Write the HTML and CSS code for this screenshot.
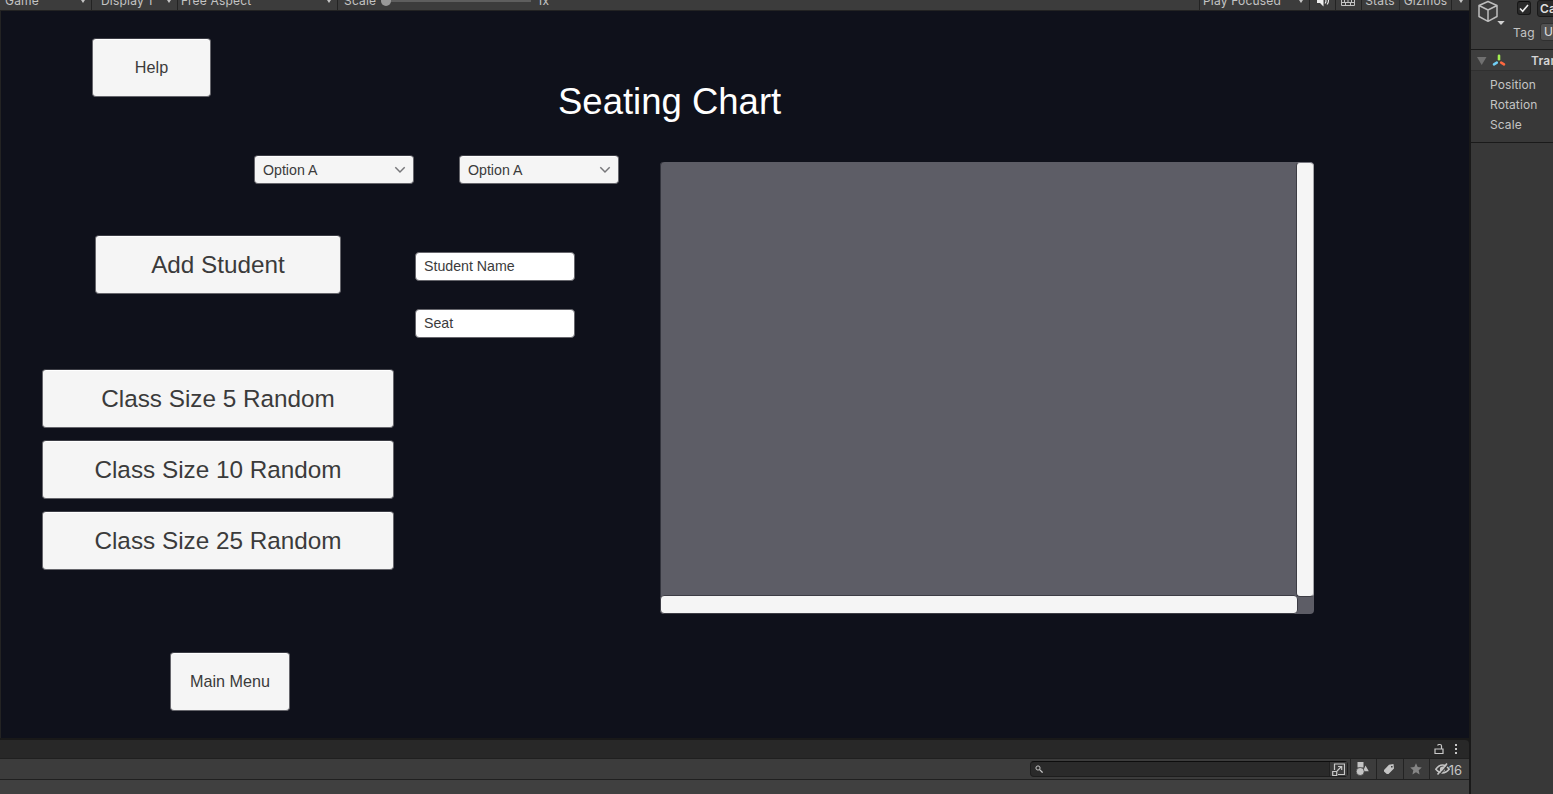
FILE: index.html
```html
<!DOCTYPE html>
<html lang="en">
<head>
<meta charset="utf-8">
<title>Seating Chart</title>
<link rel="stylesheet" href="styles.css">
</head>
<body>
<div class="editor">
  <main class="workspace">
    <header class="game-toolbar">
      <div class="tool tool-game"><span>Game</span><i class="caret"></i></div>
      <div class="tool tool-display"><span>Display 1</span><i class="caret"></i></div>
      <div class="tool tool-aspect"><span>Free Aspect</span><i class="caret"></i></div>
      <div class="tool tool-scale"><span>Scale</span><div class="slider"><b></b></div><span>1x</span></div>
      <div class="tool tool-play"><span>Play Focused</span><i class="caret"></i></div>
      <div class="tool tool-icon tool-sound"><svg width="14" height="14" viewBox="0 0 14 14"><path d="M1 5h3l3.500-3.500v11L4 9H1z" fill="#eee"/><path d="M9 4.500q2 2.500 0 5M11 2.500q3 4.500 0 8" fill="none" stroke="#eee" stroke-width="1.1"/></svg></div>
      <div class="tool tool-icon tool-grid"><svg width="14" height="12" viewBox="0 0 14 12"><path d="M.5 1.500h13v9H.5zM0 4.500h14M0 7.500h14M3.500 1v6.500M7 1v6.500M10.500 1v6.500M4.500 7.500v3M9.500 7.500v3" fill="none" stroke="#c4c4c4"/></svg></div>
      <div class="tool tool-stats"><span>Stats</span></div>
      <div class="tool tool-gizmos"><span>Gizmos</span></div>
      <div class="tool tool-more"><i class="caret"></i></div>
    </header>

    <section class="game">
      <div class="heading">
        <button class="btn btn-small">Help</button>
        <h1>Seating Chart</h1>
      </div>
      <div class="content">
        <div class="controls">
          <div class="dropdowns">
            <div class="dropdown"><span>Option A</span><svg width="12" height="8" viewBox="0 0 12 8"><path d="M1.300 1.300 6 6l4.700-4.700" fill="none" stroke="#77777a" stroke-width="1.500"/></svg></div>
            <div class="dropdown"><span>Option A</span><svg width="12" height="8" viewBox="0 0 12 8"><path d="M1.300 1.300 6 6l4.700-4.700" fill="none" stroke="#77777a" stroke-width="1.500"/></svg></div>
          </div>
          <div class="student">
            <button class="btn btn-add">Add Student</button>
            <div class="fields">
              <div class="field">Student Name</div>
              <div class="field">Seat</div>
            </div>
          </div>
          <div class="sizes">
            <button class="btn btn-wide">Class Size 5 Random</button>
            <button class="btn btn-wide">Class Size 10 Random</button>
            <button class="btn btn-wide">Class Size 25 Random</button>
          </div>
          <button class="btn btn-small btn-menu">Main Menu</button>
        </div>
        <div class="scroll-view">
          <div class="viewport"></div>
          <div class="bar bar-v"></div>
          <div class="bar bar-h"></div>
        </div>
      </div>
    </section>

    <footer class="project">
      <div class="tabs">
        <svg width="10" height="12" viewBox="0 0 10 12"><path d="M1 6h8v4.500H1zM7.500 6V3a1.500 1.500 0 0 0-1.500-1.500H5A1.500 1.500 0 0 0 3.600 2.500" fill="none" stroke="#c8c8c8" stroke-width="1.200"/></svg>
        <svg width="4" height="12" viewBox="0 0 4 12"><path d="M1 1h2v2H1zM1 5h2v2H1zM1 9h2v2H1z" fill="#c8c8c8"/></svg>
      </div>
      <div class="search-row">
        <div class="search">
          <svg width="8" height="8" viewBox="0 0 8 8"><circle cx="3" cy="3" r="2.100" fill="none" stroke="#c4c4c4"/><path d="m4.600 4.600 3 3" stroke="#c4c4c4" stroke-width="1.300"/></svg>
          <div class="search-open"><svg width="13" height="13" viewBox="0 0 13 13"><path d="M2.500 7V1h10v10.500H6M.7 8.500h4v4h-4zM5 8l4.500-4.500M6 3.500h3.700V7" fill="none" stroke="#c8c8c8" stroke-width="1.200"/></svg></div>
        </div>
        <div class="cell cell-type"><svg width="13" height="14" viewBox="0 0 13 14"><path d="M1.500 0h6v5.500h-6zM9.500 3.500l3.300 5.700H7z" fill="#c4c4c4"/><circle cx="4.200" cy="9.500" r="4" fill="#c4c4c4" stroke="#3c3c3c" stroke-width=".7"/></svg></div>
        <div class="cell cell-label"><svg width="12" height="12" viewBox="0 0 12 12"><path fill-rule="evenodd" d="M1 7l5-5.300L10.500 1 11 5.500 5.500 11H3.800L1 8.500zM8 3v1.600h1.600V3z" fill="#c4c4c4"/></svg></div>
        <div class="cell cell-star"><svg width="12" height="12" viewBox="0 0 12 12"><path d="m6 .3 1.700 3.800 4.100.4-3.100 2.800.9 4.200L6 9.300l-3.600 2.200.9-4.200L.2 4.500l4.100-.4z" fill="#858585"/></svg></div>
        <div class="cell cell-hidden"><svg width="15" height="12" viewBox="0 0 15 12"><path d="M.8 6.200Q4 2 7.500 2t6.700 4.200Q11 10 7.500 10T.8 6.200z" fill="none" stroke="#c4c4c4" stroke-width="1.500"/><circle cx="7.500" cy="6" r="2.600" fill="#c4c4c4"/><path d="M4.200 12 14 .8" stroke="#3c3c3c" stroke-width="1.200"/><path d="M2.500 11.500 12 .5" stroke="#c4c4c4" stroke-width="1.600"/></svg><span>16</span></div>
      </div>
      <div class="assets"></div>
    </footer>
  </main>

  <aside class="inspector">
    <div class="object">
      <svg class="cube" width="28" height="28" viewBox="0 0 28 28"><path d="M11 1.500 20 5.500v11l-9 4.800-9-4.800v-11zM2 5.500l9 4.500 9-4.500M11 10v11" fill="none" stroke="#bdbdbd" stroke-width="1.500" stroke-linejoin="round"/><path d="M20.300 21h7.400L24 25z" fill="#d0d0d0"/></svg>
      <div class="object-fields">
        <div class="name-row"><span class="check"><svg width="10" height="9" viewBox="0 0 10 9"><path d="m1 4.500 2.700 2.700L9 1" fill="none" stroke="#eee" stroke-width="1.600"/></svg></span><span class="name">Camera</span></div>
        <div class="tag-row"><span>Tag</span><span class="tag">Untagged</span></div>
      </div>
    </div>
    <div class="component">
      <svg width="10" height="8" viewBox="0 0 10 8"><path d="M0 0h9.500L4.700 8z" fill="#707070"/></svg>
      <svg width="14" height="13" viewBox="0 0 14 13"><path d="M7 1.700v3.600" stroke="#a4ef51" stroke-width="2.600" stroke-linecap="round"/><path d="m2 10.300 2.800-1.600" stroke="#71cff5" stroke-width="2.600" stroke-linecap="round"/><path d="m12 10.300-2.800-1.600" stroke="#ff6840" stroke-width="2.600" stroke-linecap="round"/></svg>
      <strong>Transform</strong>
    </div>
    <div class="props"><div>Position</div><div>Rotation</div><div>Scale</div></div>
  </aside>
</div>
</body>
</html>
```
FILE: styles.css
```css
* { box-sizing: border-box; }
body { margin: 0; overflow: hidden; background: #383838; color: #c4c4c4; font: 12px/20px Inter, Roboto, sans-serif; }
svg { display: block; flex: none; }
.editor { display: grid; grid-template-columns: 1469px 84px; width: 1553px; height: 794px; }
.workspace { display: flex; flex-direction: column; min-width: 0; background: #191919; }

.game-toolbar { display: flex; align-items: flex-end; height: 11px; flex: none; overflow: hidden; background: #3c3c3c; border-bottom: 1px solid #232323; letter-spacing: .2px; }
.tool { display: flex; align-items: center; justify-content: space-between; height: 20px; flex: none; border-right: 1px solid #232323; white-space: nowrap; }
.tool span { padding-top: 2px; }
.caret { border: 2.500px solid transparent; border-top: 3px solid #c4c4c4; border-bottom: 0; margin-top: 2px; }
.tool-game { width: 92px; padding: 0 6px 0 5px; }
.tool-display { width: 86px; padding: 0 6px 0 9px; }
.tool-aspect { width: 160px; padding: 0 6px 0 3px; }
.tool-scale { width: 862px; padding-left: 6px; justify-content: flex-start; gap: 6px; }
.slider { width: 150px; height: 2px; background: #5e5e5e; display: flex; align-items: center; margin: 2px 0 0 -1px; }
.slider b { width: 10px; height: 10px; border-radius: 50%; background: #999; }
.tool-play { width: 110px; padding: 0 6px 0 3px; }
.tool-icon { justify-content: center; padding-top: 1px; }
.tool-sound { width: 26px; }
.tool-grid { width: 26px; padding-right: 2px; }
.tool-stats { width: 38px; padding-right: 1px; justify-content: center; border-right-color: #2b2b2b; }
.tool-gizmos { width: 52px; justify-content: center; }
.tool-more { width: 17px; justify-content: center; border-right: 0; }

.game { height: 727px; flex: none; background: #0f111b; border-left: 1px solid #232323; font-family: "Liberation Sans", Arial, sans-serif; color: #3b3b3b; }
.heading { display: flex; align-items: flex-start; height: 144px; padding: 27px 0 0 91px; }
h1 { margin: 42px 0 0 347px; font-size: 36.500px; font-weight: 400; line-height: 44px; color: #fff; white-space: nowrap; }
.content { display: flex; align-items: flex-start; }
.controls { width: 659px; flex: none; }
.btn { display: flex; align-items: center; justify-content: center; height: 59px; padding: 0; border: 1px solid #66666c; border-top-color: #3c3d45; border-radius: 4px; background: #f5f5f5; box-shadow: inset 0 1px #fff; color: #3b3b3b; font: 24.300px "Liberation Sans", Arial, sans-serif; white-space: nowrap; }
.btn-small { width: 119px; font-size: 16.200px; }
.dropdowns { display: flex; gap: 45px; padding-left: 253px; }
.dropdown { display: flex; align-items: center; justify-content: space-between; width: 160px; height: 29px; padding: 0 7px 0 8px; border: 1px solid #66666c; border-top-color: #3c3d45; border-radius: 4px; background: #f5f5f5; box-shadow: inset 0 1px #fff; font-size: 14.200px; }
.student { display: flex; gap: 74px; margin-top: 51px; padding-left: 94px; }
.btn-add { width: 246px; }
.fields { display: grid; gap: 28px; padding-top: 17px; }
.field { width: 160px; height: 29px; padding-left: 8px; border: 1px solid #66666c; border-radius: 4px; background: #fff; font-size: 14.200px; line-height: 27px; }
.sizes { display: grid; gap: 12px; margin-top: 31px; padding-left: 41px; }
.btn-wide { width: 352px; }
.btn-menu { width: 120px; margin: 82px 0 0 169px; }
.scroll-view { display: grid; grid-template: 434px 18px / 636px 18px; margin-top: 7px; border-radius: 4px; overflow: hidden; background: #5d5d66; box-shadow: inset 1px 0 #33343d; }
.bar { border: 1px solid #3d3d45; border-radius: 4px; background: #f5f5f5; }
.bar-v { border-top-color: #777780; border-right-color: #a5a5a9; margin-bottom: -1px; }
.bar-h { margin: -1px -2px 0 0; }

.project { display: flex; flex-direction: column; flex: 1; margin-top: 2px; }
.tabs { display: flex; align-items: center; justify-content: flex-end; gap: 10px; height: 18px; padding-right: 11px; background: #282828; border-top-right-radius: 4px; }
.search-row { display: flex; height: 22px; justify-content: flex-end; background: #3c3c3c; border-top: 1px solid #202020; border-bottom: 1px solid #202020; }
.search { display: flex; align-items: center; justify-content: space-between; width: 318px; height: 16px; margin: 2px 2px 0 0; padding-left: 4px; border: 1px solid #1d1d1d; border-top-color: #0d0d0d; border-radius: 4px; background: #2a2a2a; }
.search-open { display: flex; align-items: center; justify-content: center; width: 18px; height: 14px; background: #3c3c3c; border-left: 1px solid #202020; }
.cell { display: flex; align-items: center; justify-content: center; width: 26px; border-left: 1px solid #232323; }
.cell-label { width: 27px; padding-right: 3px; }
.cell-type, .cell-star { padding-right: 2px; }
.cell-hidden { width: 40px; padding: 1px 2px 0 0; font-size: 13px; }
.cell-hidden svg { margin: -1px -1px 0 0; }
.assets { flex: 1; background: #404040; }

.inspector { overflow: hidden; border-left: 2px solid #191919; background: #383838; letter-spacing: .2px; }
.object { display: flex; height: 50px; padding-left: 6px; background: #3c3c3c; border-bottom: 1px solid #1a1a1a; }
.object-fields { flex: none; width: 120px; margin-left: 8px; }
.name-row { display: flex; gap: 6px; height: 17px; padding-left: 4px; }
.check { display: flex; align-items: center; justify-content: center; width: 14px; height: 14px; margin-top: 1px; border: 1px solid #181818; border-top-color: #0d0d0d; border-radius: 3px; background: #2a2a2a; }
.name { width: 80px; height: 17px; padding-left: 2px; border: 1px solid #191919; border-radius: 3px; background: #2a2a2a; color: #ddd; font-weight: 600; line-height: 16px; }
.tag-row { display: flex; gap: 5px; margin-top: 6px; line-height: 20px; letter-spacing: .3px; }
.tag { width: 80px; height: 18px; padding-left: 3px; border: 1px solid #303030; border-radius: 3px; background: #515151; line-height: 16px; color: #e0e0e0; }
.component { display: flex; align-items: center; height: 21px; padding: 1px 0 0 6px; background: #3e3e3e; border-bottom: 1px solid #303030; color: #d4d4d4; }
.component svg + svg { margin-left: 5px; }
.component strong { margin: 1px 0 0 25px; font-weight: 600; }
.props { height: 72px; padding: 4px 0 0 19px; border-bottom: 1px solid #1a1a1a; letter-spacing: .1px; }
```
